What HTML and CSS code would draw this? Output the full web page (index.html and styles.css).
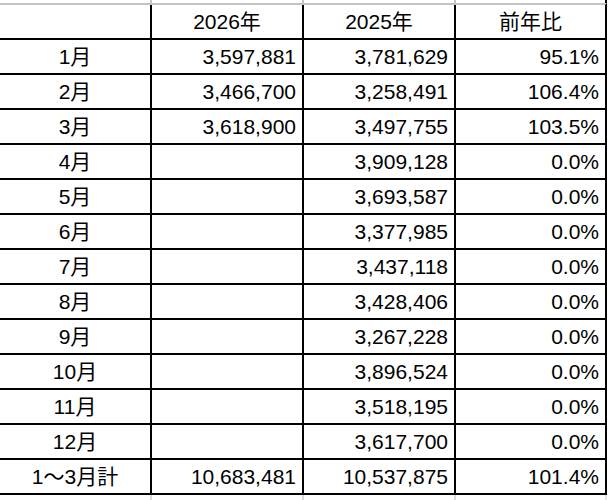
FILE: index.html
```html
<!DOCTYPE html>
<html lang="ja">
<head>
<meta charset="utf-8">
<link rel="stylesheet" href="styles.css">
</head>
<body>
<div class="sheet">
  <div class="strip strip-top"><span></span><span></span><span></span><span></span></div>
  <div class="grid">
    <div class="cell c"></div><div class="cell c">2026年</div><div class="cell c">2025年</div><div class="cell c">前年比</div>
    <div class="cell c">1月</div><div class="cell n">3,597,881</div><div class="cell n">3,781,629</div><div class="cell n">95.1%</div>
    <div class="cell c">2月</div><div class="cell n">3,466,700</div><div class="cell n">3,258,491</div><div class="cell n">106.4%</div>
    <div class="cell c">3月</div><div class="cell n">3,618,900</div><div class="cell n">3,497,755</div><div class="cell n">103.5%</div>
    <div class="cell c">4月</div><div class="cell n"></div><div class="cell n">3,909,128</div><div class="cell n">0.0%</div>
    <div class="cell c">5月</div><div class="cell n"></div><div class="cell n">3,693,587</div><div class="cell n">0.0%</div>
    <div class="cell c">6月</div><div class="cell n"></div><div class="cell n">3,377,985</div><div class="cell n">0.0%</div>
    <div class="cell c">7月</div><div class="cell n"></div><div class="cell n">3,437,118</div><div class="cell n">0.0%</div>
    <div class="cell c">8月</div><div class="cell n"></div><div class="cell n">3,428,406</div><div class="cell n">0.0%</div>
    <div class="cell c">9月</div><div class="cell n"></div><div class="cell n">3,267,228</div><div class="cell n">0.0%</div>
    <div class="cell c">10月</div><div class="cell n"></div><div class="cell n">3,896,524</div><div class="cell n">0.0%</div>
    <div class="cell c">11月</div><div class="cell n"></div><div class="cell n">3,518,195</div><div class="cell n">0.0%</div>
    <div class="cell c">12月</div><div class="cell n"></div><div class="cell n">3,617,700</div><div class="cell n">0.0%</div>
    <div class="cell c">1〜3月計</div><div class="cell n">10,683,481</div><div class="cell n">10,537,875</div><div class="cell n">101.4%</div>
  </div>
  <div class="strip strip-bottom"><span></span><span></span><span></span><span></span></div>
</div>
</body>
</html>
```
FILE: styles.css
```css
html, body {
  margin: 0;
  padding: 0;
  background: #fff;
}
body {
  width: 608px;
  height: 500px;
  overflow: hidden;
  font-family: "Liberation Sans", Arial, "Noto Sans CJK JP", sans-serif;
  color: #000;
}
.sheet {
  width: 607px;
}
.strip {
  display: grid;
  grid-template-columns: 150px 150px 150px 149px;
  column-gap: 2px;
  border-right: 2px solid #000;
}
.strip span {
  background: #fff;
}
.strip-top {
  height: 3px;
  background: #c6c6c6;
}
.strip-bottom {
  height: 5px;
  background: #dadada;
  border-right-color: #e6e6e6;
}
.grid {
  display: grid;
  grid-template-columns: 150px 150px 150px 149px;
  grid-auto-rows: 33px;
  gap: 2px;
  background: #000;
  border-top: 2px solid #c4c4c4;
  border-right: 2px solid #000;
  border-bottom: 2px solid #000;
}
.cell {
  background: #fff;
  display: flex;
  align-items: center;
  font-size: 21px;
  line-height: 1;
  white-space: nowrap;
}
.c {
  justify-content: center;
}
.n {
  justify-content: flex-end;
  padding-right: 6px;
}
```
